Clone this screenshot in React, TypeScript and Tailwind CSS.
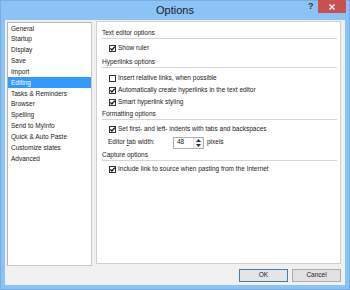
import React from "react";

const font = { fontFamily: '"Liberation Sans", Arial, sans-serif' };

function Check({ checked }: { checked: boolean }) {
  return (
    <div className="w-[7px] h-[7px] border border-[#333333] bg-white flex items-center justify-center shrink-0">
      {checked && (
        <svg width="7" height="7" viewBox="0 0 7 7" className="-m-px">
          <path d="M1.4 3.4 L2.9 5 L5.8 1.6" fill="none" stroke="#111" strokeWidth="1.3" />
        </svg>
      )}
    </div>
  );
}

function Header({ text, mt, h }: { text: string; mt: string; h: string }) {
  return (
    <div className={`${mt} ${h} flex items-center border-b border-[#d5d5d5] mr-[3px]`}>
      <span className="text-[6.5px] text-[#1a1a1a] leading-none">{text}</span>
    </div>
  );
}

function Item({ text, checked, mt }: { text: string; checked: boolean; mt: string }) {
  return (
    <div className={`${mt} h-[11px] flex items-center pl-[7px] gap-[2px]`}>
      <Check checked={checked} />
      <span className="text-[6.5px] text-[#1a1a1a] leading-none">{text}</span>
    </div>
  );
}

const items = [
  "General",
  "Startup",
  "Display",
  "Save",
  "Import",
  "Editing",
  "Tasks & Reminders",
  "Browser",
  "Spelling",
  "Send to MyInfo",
  "Quick & Auto Paste",
  "Customize states",
  "Advanced",
];

export default function App() {
  return (
    <div
      className="w-[350px] h-[290px] bg-[#8cc3f5] flex flex-col border border-[#78ade2] box-border"
      style={font}
    >
      {/* title bar */}
      <div className="h-[19px] relative flex items-center justify-center shrink-0">
        <span className="text-[11px] text-[#1a1a1a] leading-none -mt-[1px]">Options</span>
        <span className="absolute left-[307px] top-[1px] text-[9px] font-bold text-[#333] leading-none">?</span>
        <div className="absolute left-[317px] top-[-1px] w-[28px] h-[13px] bg-[#c75050] flex items-center justify-center">
          <svg width="6" height="6" viewBox="0 0 6 6">
            <path d="M0.5 0.5 L5.5 5.5 M5.5 0.5 L0.5 5.5" stroke="#fff" strokeWidth="1.4" />
          </svg>
        </div>
      </div>
      {/* client */}
      <div className="flex-1 mx-[4px] mb-[4px] bg-[#f0f0f0] flex flex-col pl-[2px] pr-[4px] pt-[1px]">
        <div className="flex gap-[4px] h-[244px]">
          {/* list */}
          <div className="w-[85px] h-[244px] mt-[1px] bg-white border border-[#b4b4b4] border-r-[#c8c8c8] border-b-[#c8c8c8] flex flex-col">
            {items.map((t) => (
              <div
                key={t}
                className={`h-[10.83px] flex items-center pl-[3px] pt-[1px] text-[6.5px] leading-none ${
                  t === "Editing" ? "bg-[#3399ff] text-white" : "text-[#1a1a1a]"
                }`}
              >
                {t}
              </div>
            ))}
          </div>
          {/* right panel */}
          <div className="w-[245px] h-[243px] bg-white border border-[#d0d0d0] flex flex-col pl-[5px]">
            <Header text="Text editor options" mt="mt-[7px]" h="h-[10px]" />
            <Item text="Show ruler" checked mt="mt-[4px]" />
            <Header text="Hyperlinks options" mt="mt-[4px]" h="h-[10px]" />
            <Item text="Insert relative links, when possible" checked={false} mt="mt-[5px]" />
            <Item text="Automatically create hyperlinks in the text editor" checked mt="mt-[1px]" />
            <Item text="Smart hyperlink styling" checked mt="mt-[1px]" />
            <Header text="Formatting options" mt="mt-[2px]" h="h-[10px]" />
            <Item text="Set first- and left- indents with tabs and backspaces" checked mt="mt-[4px]" />
            <div className="mt-[1px] h-[13px] flex items-center pl-[6px]">
              <span className="text-[6.5px] text-[#1a1a1a] leading-none w-[65px]">
                Editor <span className="underline">t</span>ab width:
              </span>
              <div className="w-[31px] h-[12px] border border-[#abadb3] bg-white flex">
                <div className="flex-1 flex items-center pl-[3px] text-[6.5px] leading-none text-[#1a1a1a]">48</div>
                <div className="w-[10px] flex flex-col border-l border-[#e3e3e3] bg-[#f4f4f4]">
                  <div className="flex-1 flex items-center justify-center">
                    <svg width="5" height="3" viewBox="0 0 5 3"><path d="M0 3 L2.5 0 L5 3 Z" fill="#333" /></svg>
                  </div>
                  <div className="flex-1 flex items-center justify-center">
                    <svg width="5" height="3" viewBox="0 0 5 3"><path d="M0 0 L2.5 3 L5 0 Z" fill="#333" /></svg>
                  </div>
                </div>
              </div>
              <span className="text-[6.5px] text-[#1a1a1a] leading-none ml-[3px]">pixels</span>
            </div>
            <Header text="Capture options" mt="mt-[1px]" h="h-[11px]" />
            <Item text="Include link to source when pasting from the Internet" checked mt="mt-[3px]" />
          </div>
        </div>
        {/* buttons */}
        <div className="flex justify-end gap-[4px] mt-[4px]">
          <div className="w-[49px] h-[13px] border border-[#3c7fb1] bg-[#e5e5e5] flex items-center justify-center text-[6.5px] leading-none text-[#1a1a1a]">
            OK
          </div>
          <div className="w-[49px] h-[13px] border border-[#acacac] bg-[#e1e1e1] flex items-center justify-center text-[6.5px] leading-none text-[#1a1a1a]">
            Cancel
          </div>
        </div>
      </div>
    </div>
  );
}
